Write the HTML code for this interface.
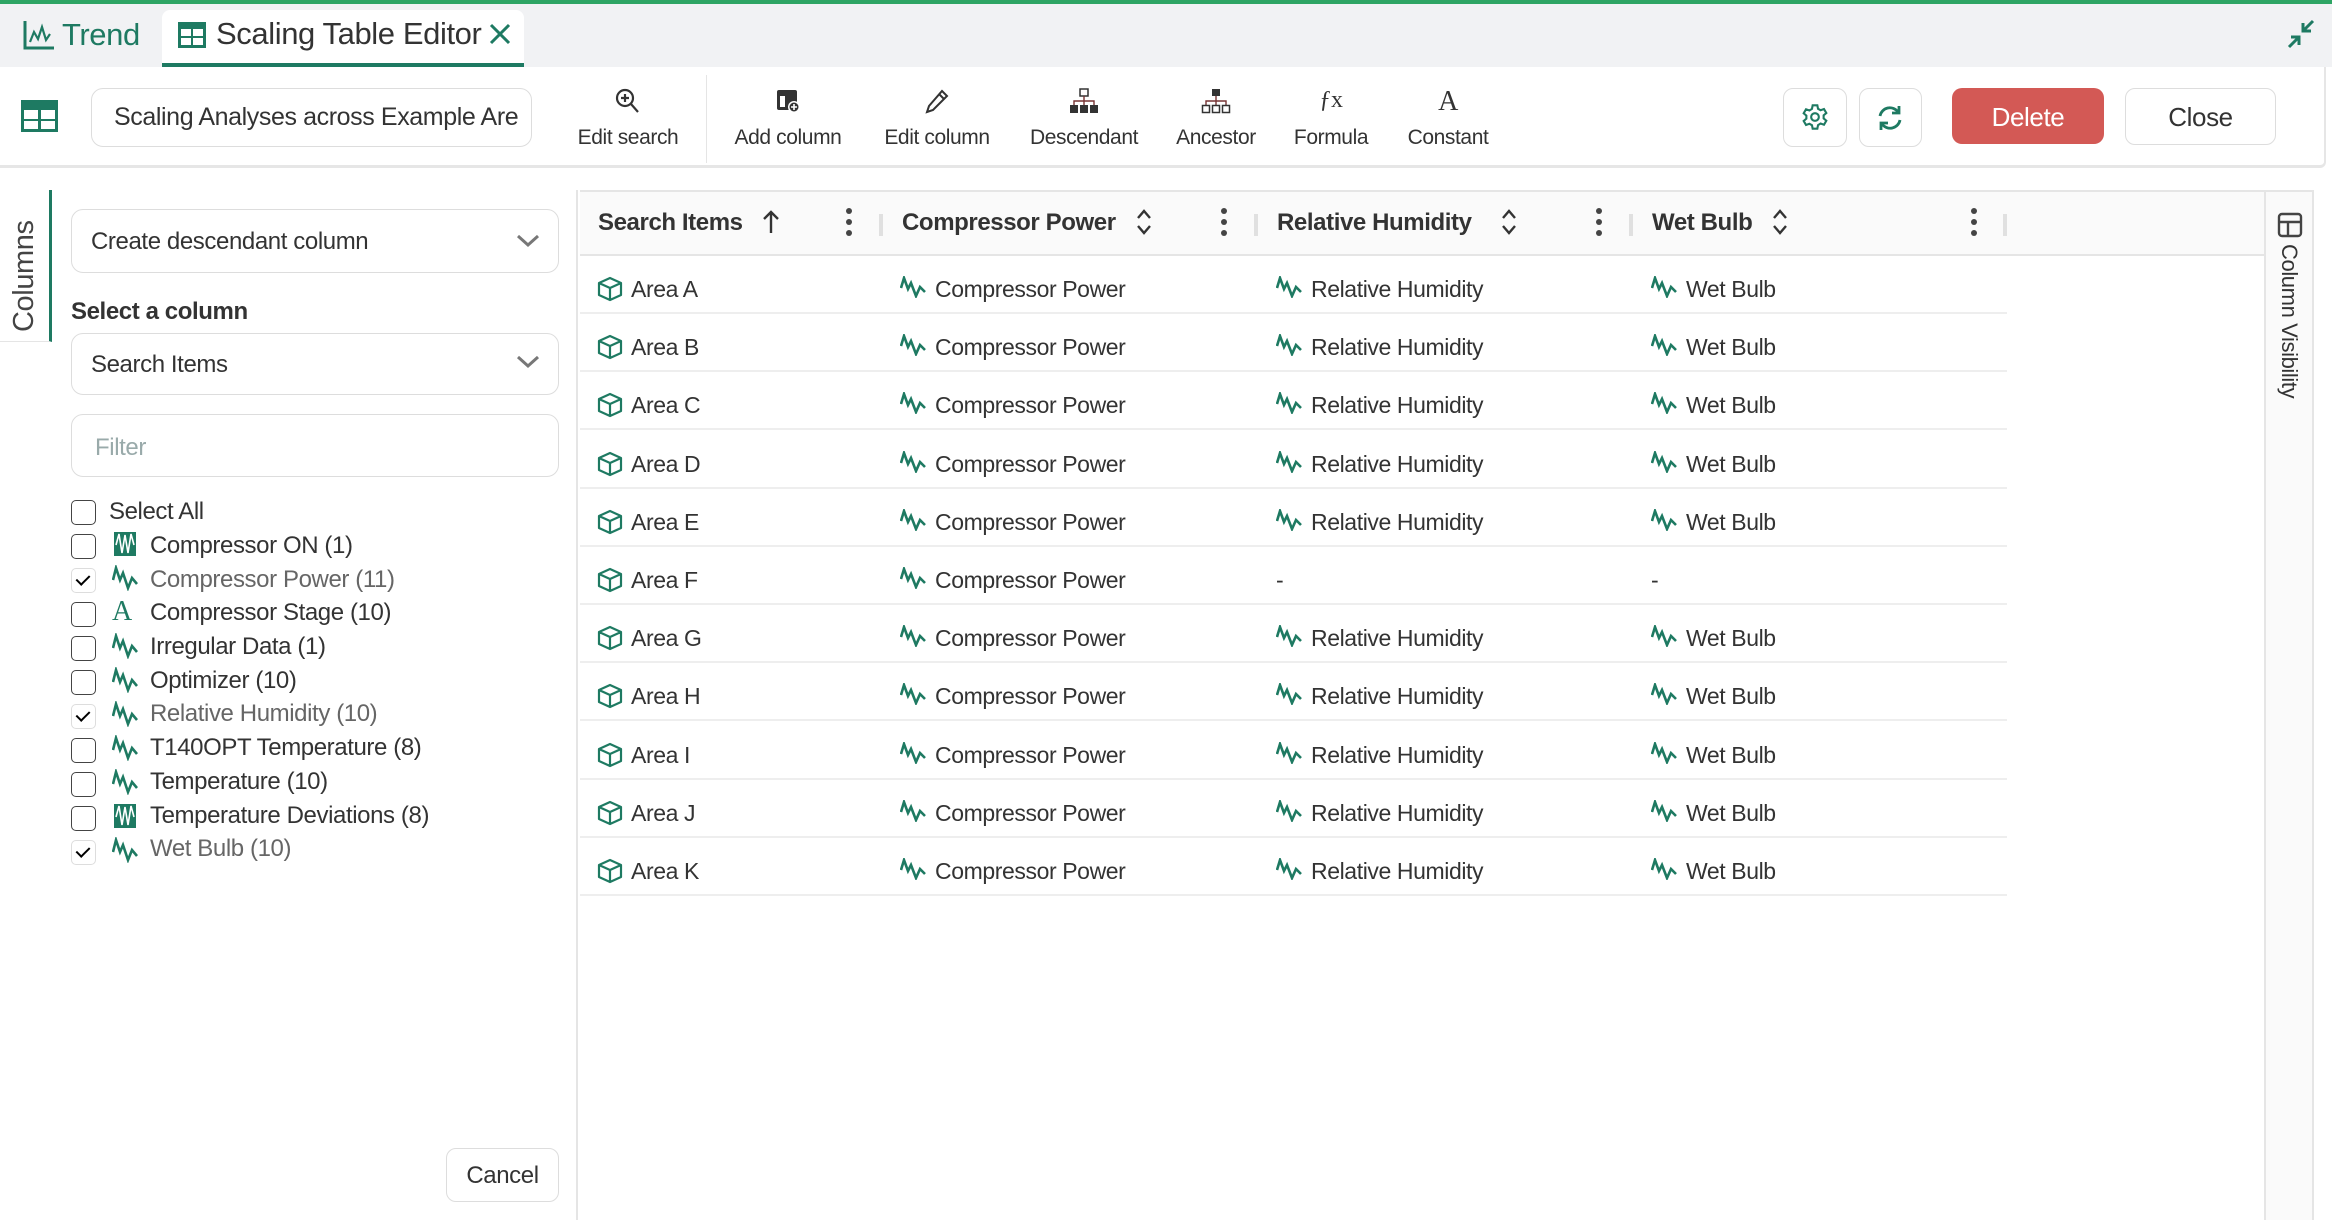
<!DOCTYPE html>
<html><head><meta charset="utf-8">
<style>
*{box-sizing:border-box;margin:0;padding:0}
body{width:2332px;height:1220px;overflow:hidden;background:#fff;font-family:"Liberation Sans",sans-serif;color:#333;position:relative;letter-spacing:-0.4px}
.a{position:absolute}
.topbar{left:0;top:0;width:2332px;height:4px;background:#2ea564}
.tabs{left:0;top:4px;width:2332px;height:63px;background:#f1f2f4}
.tb{left:0;top:67px;width:2326px;height:101px;background:#fff;border-bottom:3px solid #e6e6e6;border-right:2px solid #e6e6e6;border-bottom-right-radius:6px}
.btn{border:1px solid #ddd;border-radius:8px;background:#fff}
.tool{top:87px;text-align:center;font-size:21px;color:#333;width:140px}
.tool svg{display:block;margin:0 auto 11px;height:28px}
.cb{left:71px;width:25px;height:25px;border:1.5px solid #444;border-radius:5px}
.cb.on{border-color:#ddd}
.cb.on:after{content:"";position:absolute;left:7px;top:3px;width:6px;height:11px;border:solid #000;border-width:0 2.5px 2.5px 0;transform:rotate(45deg)}
.it{left:150px;font-size:24px;line-height:30px}
.it.g{color:#666}
.ic{left:112px}
.hd{top:190px;left:580px;width:1684px;height:66px;background:#fafafa;border-top:2px solid #e5e5e5;border-bottom:2px solid #e5e5e5}
.ht{top:209px;font-size:24px;font-weight:bold;color:#333}
.dots{top:208px;width:6px}
.dots i{display:block;width:6px;height:6px;border-radius:3px;background:#444;margin-bottom:5px}
.sep{top:214px;width:4px;height:22px;background:#e0e0e0}
.row{left:580px;width:1427px;height:58px;border-bottom:2px solid #eee}
.c{font-size:23px;line-height:58px;color:#333;top:4px}
</style></head><body>
<div class="a topbar"></div>
<div class="a tabs"></div>
<svg class="a" style="left:23px;top:20px" width="32" height="30" viewBox="0 0 32 30"><path d="M2 1V28H31" stroke="#1e7a62" stroke-width="3" fill="none"/><path d="M7 22L11 12L15 19L19 7L23 20L27 14" stroke="#1e7a62" stroke-width="2.2" fill="none"/></svg>
<div class="a" style="left:62px;top:17px;font-size:31px;color:#1e7a62">Trend</div>
<div class="a" style="left:162px;top:10px;width:362px;height:57px;background:#fff;border-radius:8px 8px 0 0;border-bottom:4px solid #1e7a62"></div>
<svg class="a" style="left:177px;top:21px" width="30" height="28" viewBox="0 0 30 28"><rect x="1" y="1" width="28" height="26" fill="#1e7a62"/><rect x="4" y="8" width="10" height="7" fill="#fff"/><rect x="16" y="8" width="10" height="7" fill="#fff"/><rect x="4" y="17" width="10" height="7" fill="#fff"/><rect x="16" y="17" width="10" height="7" fill="#fff"/></svg>
<div class="a" style="left:216px;top:16px;font-size:31px;color:#333">Scaling Table Editor</div>
<svg class="a" style="left:489px;top:23px" width="22" height="22" viewBox="0 0 22 22"><path d="M2 2L20 20M20 2L2 20" stroke="#1e7a62" stroke-width="3"/></svg>
<svg class="a" style="left:2287px;top:19px" width="28" height="30" viewBox="0 0 28 30"><path d="M26 2L16 12M16 4V12H24M2 28L12 18M4 18H12V26" stroke="#1e7a62" stroke-width="3" fill="none"/></svg>

<div class="a tb"></div>
<svg class="a" style="left:21px;top:100px" width="37" height="32" viewBox="0 0 37 32"><rect width="37" height="32" fill="#1e7a62"/><rect x="3" y="10" width="14" height="9" fill="#fff"/><rect x="20" y="10" width="14" height="9" fill="#fff"/><rect x="3" y="21" width="14" height="8" fill="#fff"/><rect x="20" y="21" width="14" height="8" fill="#fff"/></svg>
<div class="a btn" style="left:91px;top:88px;width:441px;height:59px;border-radius:12px"></div>
<div class="a" style="left:114px;top:103px;font-size:25px;color:#333">Scaling Analyses across Example Are</div>
<div class="a" style="left:706px;top:75px;width:1px;height:88px;background:#e5e5e5"></div>

<div class="a tool" style="left:558px"><svg width="28" height="28" viewBox="0 0 28 28"><circle cx="11" cy="11" r="8" stroke="#333" stroke-width="2.2" fill="none"/><path d="M17 17L24 25M11 7V15M7 11H15" stroke="#333" stroke-width="2.2"/></svg>Edit search</div>
<div class="a tool" style="left:718px"><svg width="28" height="28" viewBox="0 0 28 28"><rect x="3" y="3" width="20" height="20" rx="2" fill="#333"/><rect x="6" y="9" width="5" height="11" fill="#fff"/><circle cx="20" cy="20" r="6" fill="#fff"/><circle cx="20" cy="20" r="4.5" fill="#333"/><path d="M20 17V23M17 20H23" stroke="#fff" stroke-width="1.6"/></svg>Add column</div>
<div class="a tool" style="left:867px"><svg width="28" height="28" viewBox="0 0 28 28"><path d="M19 4L24 9L10 23L4 25L6 19Z" stroke="#333" stroke-width="2" fill="none"/><path d="M16 7L21 12" stroke="#333" stroke-width="2"/></svg>Edit column</div>
<div class="a tool" style="left:1014px"><svg width="30" height="28" viewBox="0 0 30 28"><rect x="11" y="2" width="8" height="7" stroke="#333" stroke-width="1.5" fill="#fff"/><path d="M15 9V14M5 18V14H25V18M15 14V18" stroke="#733" stroke-width="1.4" fill="none"/><rect x="1" y="18" width="8" height="8" fill="#333"/><rect x="11" y="18" width="8" height="8" fill="#333"/><rect x="21" y="18" width="8" height="8" fill="#333"/></svg>Descendant</div>
<div class="a tool" style="left:1146px"><svg width="30" height="28" viewBox="0 0 30 28"><rect x="11" y="2" width="8" height="7" fill="#333"/><path d="M15 9V14M5 18V14H25V18M15 14V18" stroke="#733" stroke-width="1.4" fill="none"/><rect x="1.5" y="18.5" width="7" height="7" stroke="#333" stroke-width="1.5" fill="#fff"/><rect x="11.5" y="18.5" width="7" height="7" stroke="#333" stroke-width="1.5" fill="#fff"/><rect x="21.5" y="18.5" width="7" height="7" stroke="#333" stroke-width="1.5" fill="#fff"/></svg>Ancestor</div>
<div class="a tool" style="left:1261px"><div style="height:28px;margin-bottom:11px;font-family:'Liberation Serif',serif;font-size:24px;line-height:26px">ƒx</div>Formula</div>
<div class="a tool" style="left:1378px"><div style="height:28px;margin-bottom:11px;font-family:'Liberation Serif',serif;font-size:28px;line-height:30px">A</div>Constant</div>

<div class="a btn" style="left:1783px;top:88px;width:64px;height:59px;border-radius:10px"></div>
<svg class="a" style="left:1801px;top:103px" width="28" height="28" viewBox="0 0 24 24"><path d="M10 2h4l.6 3 2.2 1.2 2.9-1 2 3.4-2.3 2v2.6l2.3 2-2 3.4-2.9-1L14.6 19 14 22h-4l-.6-3-2.2-1.2-2.9 1-2-3.4 2.3-2V10.8l-2.3-2 2-3.4 2.9 1L9.4 5z" stroke="#1e7a62" stroke-width="1.8" fill="none"/><circle cx="12" cy="12" r="3.3" stroke="#1e7a62" stroke-width="1.8" fill="none"/></svg>
<div class="a btn" style="left:1859px;top:88px;width:63px;height:59px;border-radius:10px"></div>
<svg class="a" style="left:1876px;top:104px" width="28" height="28" viewBox="0 0 28 28"><path d="M4 12A10 10 0 0 1 22 8M24 16A10 10 0 0 1 6 20" stroke="#1e7a62" stroke-width="2.8" fill="none"/><path d="M23 2V9H16M5 26V19H12" stroke="#1e7a62" stroke-width="2.8" fill="none"/></svg>
<div class="a" style="left:1952px;top:88px;width:152px;height:56px;background:#d35955;border-radius:10px;color:#fff;font-size:26px;text-align:center;line-height:58px">Delete</div>
<div class="a btn" style="left:2125px;top:88px;width:151px;height:57px;border-radius:10px;font-size:26px;text-align:center;line-height:57px;color:#333">Close</div>

<div class="a" style="left:0;top:190px;width:52px;height:152px;border-right:3px solid #1e7a62;border-bottom:1px solid #e5e5e5"></div>
<div class="a" style="left:8px;top:332px;transform:rotate(-90deg);transform-origin:0 0;font-size:29px;color:#444;white-space:nowrap;width:150px">Columns</div>
<div class="a" style="left:576px;top:190px;width:2px;height:1030px;background:#e5e5e5"></div>
<div class="a btn" style="left:71px;top:209px;width:488px;height:64px;border-radius:12px"></div>
<div class="a" style="left:91px;top:228px;font-size:24px;color:#333">Create descendant column</div>
<svg class="a" style="left:516px;top:234px" width="24" height="14" viewBox="0 0 24 14"><path d="M2 2L12 11L22 2" stroke="#777" stroke-width="3" fill="none"/></svg>
<div class="a" style="left:71px;top:298px;font-size:24px;font-weight:bold;color:#333">Select a column</div>
<div class="a btn" style="left:71px;top:333px;width:488px;height:62px;border-radius:12px"></div>
<div class="a" style="left:91px;top:351px;font-size:24px;color:#333">Search Items</div>
<svg class="a" style="left:516px;top:355px" width="24" height="14" viewBox="0 0 24 14"><path d="M2 2L12 11L22 2" stroke="#777" stroke-width="3" fill="none"/></svg>
<div class="a btn" style="left:71px;top:414px;width:488px;height:63px;border-radius:12px"></div>
<div class="a" style="left:95px;top:434px;font-size:24px;color:#9aa">Filter</div>

<div class="a cb" style="top:500px"></div><div class="a it" style="left:109px;top:497px">Select All</div>
<div class="a cb" style="top:534px"></div><svg class="a ic" style="top:531px" width="26" height="26" viewBox="0 0 26 26"><rect x="2" y="1" width="22" height="24" fill="#1e7a62"/><path d="M4 14L7 3L10 22L13 4L16 22L19 3L22 14" stroke="#fff" stroke-width="1.6" fill="none"/></svg><div class="a it" style="top:531px">Compressor ON (1)</div>
<div class="a cb on" style="top:568px"></div><svg class="a ic" style="top:565px" width="26" height="26" viewBox="0 0 26 26"><path d="M1 15L4 3L8 15L11 8L16 23L20 13L25 19" stroke="#1e7a62" stroke-width="2.6" fill="none"/></svg><div class="a it g" style="top:565px">Compressor Power (11)</div>
<div class="a cb" style="top:602px"></div><div class="a" style="left:112px;top:596px;font-size:28px;color:#1e7a62;font-family:'Liberation Serif',serif">A</div><div class="a it" style="top:598px">Compressor Stage (10)</div>
<div class="a cb" style="top:636px"></div><svg class="a ic" style="top:633px" width="26" height="26" viewBox="0 0 26 26"><path d="M1 15L4 3L8 15L11 8L16 23L20 13L25 19" stroke="#1e7a62" stroke-width="2.6" fill="none"/></svg><div class="a it" style="top:632px">Irregular Data (1)</div>
<div class="a cb" style="top:670px"></div><svg class="a ic" style="top:667px" width="26" height="26" viewBox="0 0 26 26"><path d="M1 15L4 3L8 15L11 8L16 23L20 13L25 19" stroke="#1e7a62" stroke-width="2.6" fill="none"/></svg><div class="a it" style="top:666px">Optimizer (10)</div>
<div class="a cb on" style="top:704px"></div><svg class="a ic" style="top:701px" width="26" height="26" viewBox="0 0 26 26"><path d="M1 15L4 3L8 15L11 8L16 23L20 13L25 19" stroke="#1e7a62" stroke-width="2.6" fill="none"/></svg><div class="a it g" style="top:699px">Relative Humidity (10)</div>
<div class="a cb" style="top:738px"></div><svg class="a ic" style="top:735px" width="26" height="26" viewBox="0 0 26 26"><path d="M1 15L4 3L8 15L11 8L16 23L20 13L25 19" stroke="#1e7a62" stroke-width="2.6" fill="none"/></svg><div class="a it" style="top:733px">T140OPT Temperature (8)</div>
<div class="a cb" style="top:772px"></div><svg class="a ic" style="top:769px" width="26" height="26" viewBox="0 0 26 26"><path d="M1 15L4 3L8 15L11 8L16 23L20 13L25 19" stroke="#1e7a62" stroke-width="2.6" fill="none"/></svg><div class="a it" style="top:767px">Temperature (10)</div>
<div class="a cb" style="top:806px"></div><svg class="a ic" style="top:803px" width="26" height="26" viewBox="0 0 26 26"><rect x="2" y="1" width="22" height="24" fill="#1e7a62"/><path d="M4 14L7 3L10 22L13 4L16 22L19 3L22 14" stroke="#fff" stroke-width="1.6" fill="none"/></svg><div class="a it" style="top:801px">Temperature Deviations (8)</div>
<div class="a cb on" style="top:840px"></div><svg class="a ic" style="top:837px" width="26" height="26" viewBox="0 0 26 26"><path d="M1 15L4 3L8 15L11 8L16 23L20 13L25 19" stroke="#1e7a62" stroke-width="2.6" fill="none"/></svg><div class="a it g" style="top:834px">Wet Bulb (10)</div>

<div class="a btn" style="left:446px;top:1148px;width:113px;height:54px;border-radius:10px;font-size:24px;text-align:center;line-height:54px;color:#333">Cancel</div>

<div class="a hd"></div>
<div class="a ht" style="left:598px">Search Items</div>
<svg class="a" style="left:762px;top:210px" width="18" height="24" viewBox="0 0 18 24"><path d="M9 23V2M2 9L9 2L16 9" stroke="#333" stroke-width="2.4" fill="none"/></svg>
<div class="a dots" style="left:846px"><i></i><i></i><i></i></div><div class="a sep" style="left:879px"></div>
<div class="a ht" style="left:902px">Compressor Power</div>
<svg class="a" style="left:1135px;top:208px" width="18" height="28" viewBox="0 0 18 28"><path d="M3 10L9 3L15 10M3 18L9 25L15 18" stroke="#333" stroke-width="2.4" fill="none"/></svg>
<div class="a dots" style="left:1221px"><i></i><i></i><i></i></div><div class="a sep" style="left:1254px"></div>
<div class="a ht" style="left:1277px">Relative Humidity</div>
<svg class="a" style="left:1500px;top:208px" width="18" height="28" viewBox="0 0 18 28"><path d="M3 10L9 3L15 10M3 18L9 25L15 18" stroke="#333" stroke-width="2.4" fill="none"/></svg>
<div class="a dots" style="left:1596px"><i></i><i></i><i></i></div><div class="a sep" style="left:1629px"></div>
<div class="a ht" style="left:1652px">Wet Bulb</div>
<svg class="a" style="left:1771px;top:208px" width="18" height="28" viewBox="0 0 18 28"><path d="M3 10L9 3L15 10M3 18L9 25L15 18" stroke="#333" stroke-width="2.4" fill="none"/></svg>
<div class="a dots" style="left:1971px"><i></i><i></i><i></i></div><div class="a sep" style="left:2003px"></div>

<div class="a" style="left:2264px;top:190px;width:50px;height:1030px;background:#fafafa;border-left:2px solid #e5e5e5;border-right:2px solid #e5e5e5;border-top:2px solid #e5e5e5"></div>
<svg class="a" style="left:2277px;top:212px" width="26" height="26" viewBox="0 0 26 26"><rect x="2" y="2" width="22" height="22" rx="3" stroke="#444" stroke-width="2.4" fill="none"/><path d="M2 10H24M11 10V24" stroke="#444" stroke-width="2.4"/></svg>
<div class="a" style="left:2302px;top:244px;transform:rotate(90deg);transform-origin:0 0;font-size:22px;color:#333;white-space:nowrap">Column Visibility</div>

<div id="rows"></div>
<script>
var L="ABCDEFGHIJK",h="";
var sig='<svg class="a" style="top:20px" width="26" height="22" viewBox="0 0 26 22"><path d="M1 12L4 2L8 13L11 7L16 20L20 11L25 16" stroke="#1e7a62" stroke-width="2.6" fill="none"/></svg>';
for(var i=0;i<11;i++){
var t=256+i*58.2;
h+='<div class="a row" style="top:'+t+'px">';
h+='<svg class="a" style="left:17px;top:20px" width="26" height="26" viewBox="0 0 26 26"><path d="M13 2L24 7V19L13 24L2 19V7Z M2 7L13 12L24 7 M13 12V24" stroke="#1e7a62" stroke-width="2.2" fill="none" stroke-linejoin="round"/></svg>';
h+='<div class="a c" style="left:51px">Area '+L[i]+'</div>';
h+=sig.replace('class="a" style="','class="a" style="left:320px;')+'<div class="a c" style="left:355px">Compressor Power</div>';
if(i==5){h+='<div class="a c" style="left:696px">-</div><div class="a c" style="left:1071px">-</div>';}
else{h+=sig.replace('class="a" style="','class="a" style="left:696px;')+'<div class="a c" style="left:731px">Relative Humidity</div>';
h+=sig.replace('class="a" style="','class="a" style="left:1071px;')+'<div class="a c" style="left:1106px">Wet Bulb</div>';}
h+='</div>';}
document.getElementById("rows").innerHTML=h;
</script>
</body></html>
